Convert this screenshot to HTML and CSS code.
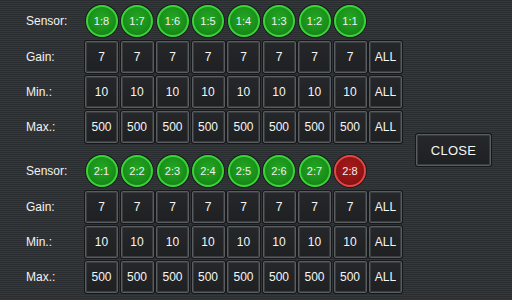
FILE: index.html
```html
<!DOCTYPE html>
<html lang="en">
<head>
    <meta charset="UTF-8">
    <meta name="viewport" content="width=device-width, initial-scale=1.0">
    <title>Sensor Settings</title>
    <link rel="stylesheet" href="styles.css">
</head>
<body>
    <div class="screen">
        <div class="panel">
            <div class="block">
                <span class="label">Sensor:</span>
                <span class="led on">1:8</span>
                <span class="led on">1:7</span>
                <span class="led on">1:6</span>
                <span class="led on">1:5</span>
                <span class="led on">1:4</span>
                <span class="led on">1:3</span>
                <span class="led on">1:2</span>
                <span class="led on">1:1</span>
                <span></span>

                <span class="label">Gain:</span>
                <button>7</button><button>7</button><button>7</button><button>7</button>
                <button>7</button><button>7</button><button>7</button><button>7</button>
                <button>ALL</button>

                <span class="label">Min.:</span>
                <button>10</button><button>10</button><button>10</button><button>10</button>
                <button>10</button><button>10</button><button>10</button><button>10</button>
                <button>ALL</button>

                <span class="label">Max.:</span>
                <button>500</button><button>500</button><button>500</button><button>500</button>
                <button>500</button><button>500</button><button>500</button><button>500</button>
                <button>ALL</button>
            </div>

            <div class="block">
                <span class="label">Sensor:</span>
                <span class="led on">2:1</span>
                <span class="led on">2:2</span>
                <span class="led on">2:3</span>
                <span class="led on">2:4</span>
                <span class="led on">2:5</span>
                <span class="led on">2:6</span>
                <span class="led on">2:7</span>
                <span class="led off">2:8</span>
                <span></span>

                <span class="label">Gain:</span>
                <button>7</button><button>7</button><button>7</button><button>7</button>
                <button>7</button><button>7</button><button>7</button><button>7</button>
                <button>ALL</button>

                <span class="label">Min.:</span>
                <button>10</button><button>10</button><button>10</button><button>10</button>
                <button>10</button><button>10</button><button>10</button><button>10</button>
                <button>ALL</button>

                <span class="label">Max.:</span>
                <button>500</button><button>500</button><button>500</button><button>500</button>
                <button>500</button><button>500</button><button>500</button><button>500</button>
                <button>ALL</button>
            </div>
        </div>

        <div class="side">
            <button class="close">CLOSE</button>
        </div>
    </div>
</body>
</html>
```

FILE: styles.css
```css
body {
    margin: 0;
    padding: 0;
    width: 512px;
    height: 300px;
    overflow: hidden;
    font-family: "Liberation Sans", Arial, sans-serif;
    color: #f2f2f2;
    background-color: #303336;
    background-image: repeating-linear-gradient(
        to bottom,
        #2b2e31 0px,
        #2b2e31 1px,
        #35383b 1px,
        #35383b 2px
    );
}

.screen {
    display: flex;
    height: 300px;
}

.panel {
    padding: 4px 0 0 26px;
    display: flex;
    flex-direction: column;
    gap: 11px;
}

.block {
    display: grid;
    grid-template-columns: 56.5px repeat(9, 33px);
    grid-template-rows: 34px 32px 32px 32px;
    column-gap: 2.5px;
    row-gap: 3px;
    align-items: center;
}

.label {
    font-size: 12px;
}

button {
    width: 33px;
    height: 32px;
    padding: 0;
    font-family: "Liberation Sans", Arial, sans-serif;
    font-size: 12px;
    color: #f6f6f6;
    background: linear-gradient(#25272a, #1e2022);
    border: 1px solid #5a5d60;
    border-radius: 2px;
    box-shadow: 0 0 0 1px #151718, inset 0 0 0 1px #3a3d40;
    cursor: pointer;
}

.led {
    width: 32px;
    height: 32px;
    margin-left: 0.5px;
    border-radius: 50%;
    box-sizing: border-box;
    display: flex;
    align-items: center;
    justify-content: center;
    font-size: 11px;
    color: #f0f0f0;
    box-shadow: 0 0 0 1px #1a1c1d;
}

.led.on {
    border: 2px solid #3ad43a;
    background: radial-gradient(circle at 50% 40%, #24a424 0%, #1a921a 55%, #168416 78%, #28b428 100%);
}

.led.off {
    border: 2px solid #e24646;
    background: radial-gradient(circle at 50% 40%, #a41a1a 0%, #921414 55%, #881010 78%, #c02a2a 100%);
}

.side {
    display: flex;
    align-items: center;
    padding-left: 14px;
}

.close {
    width: 75px;
    height: 32px;
    font-size: 13px;
    letter-spacing: 0.3px;
}
```
